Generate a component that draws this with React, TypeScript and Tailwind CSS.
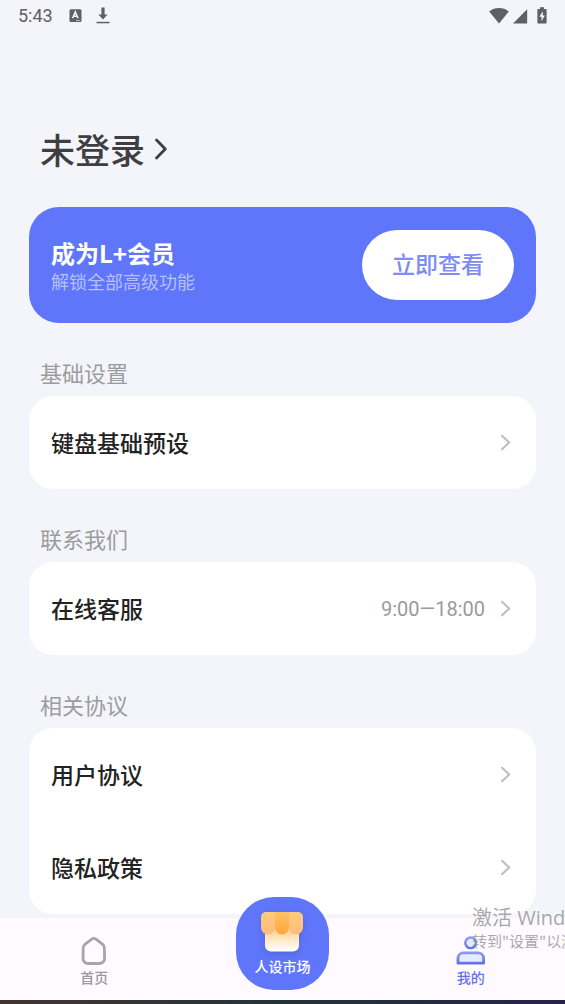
import { useState } from "react";
import type { ReactNode } from "react";

type Tab = "home" | "market" | "mine";

interface Row {
  label: string;
  note?: string;
}

interface Section {
  title: string;
  rows: Row[];
}

const sections: Section[] = [
  { title: "基础设置", rows: [{ label: "键盘基础预设" }] },
  { title: "联系我们", rows: [{ label: "在线客服", note: "9:00—18:00" }] },
  { title: "相关协议", rows: [{ label: "用户协议" }, { label: "隐私政策" }] },
];

function StatusBar() {
  return (
    <header className="flex h-8 items-center justify-between pr-[17px] pl-[18px] font-[Roboto,sans-serif] text-[#5f6063]">
      <div className="flex items-center">
        <span className="text-[18px] leading-8">5:43</span>
        <svg className="ml-4 h-[14px] w-[14px]" viewBox="0 0 14 14" fill="none">
          <rect x="0.500" y="0.200" width="12" height="12.800" rx="1.500" fill="currentColor" />
          <path d="M3.600 9.300 6.300 3 9 9.300M4.600 7.300H8" stroke="#f4f5fa" strokeWidth="1.600" />
          <path d="M7 11.500h4" stroke="#b9babd" strokeWidth="1" />
        </svg>
        <svg className="ml-3 h-[18px] w-[16px]" viewBox="0 0 16 18" fill="currentColor">
          <path d="M6.400.500h3.200v7h3L8 12.500 3.400 7.500h3z" />
          <path d="M1.500 14.800h13v1.500h-13z" />
        </svg>
      </div>
      <div className="flex items-center">
        <svg className="h-[18px] w-[20px]" viewBox="0 0 20 18" fill="currentColor">
          <path d="M10 16.600.200 4.600C2.900 2.100 6.300 1 10 1s7.100 1.100 9.800 3.600z" />
        </svg>
        <svg className="ml-1 h-[18px] w-[15px]" viewBox="0 0 15 18" fill="currentColor">
          <path d="M14.200 2.200v14.200H0z" />
        </svg>
        <svg className="ml-2 h-[18px] w-[12px]" viewBox="0 0 12 18">
          <path
            d="M4 .200h4v1.700h1.600c.6 0 1 .4 1 1v12.600c0 .6-.4 1-1 1H2.400c-.6 0-1-.4-1-1V2.900c0-.6.4-1 1-1H4z"
            fill="currentColor"
          />
          <path d="M6.800 4.200 3.400 9.800h2.100v4.400l3.300-5.700H6.800z" fill="#f4f5fa" />
        </svg>
      </div>
    </header>
  );
}

function Chevron() {
  return (
    <svg className="h-[18px] w-[12px]" viewBox="0 0 12 18" fill="none">
      <path
        d="M2 1.700 9.200 8.500 2 15.300"
        stroke="#bdbdbd"
        strokeWidth="2"
        strokeLinecap="round"
        strokeLinejoin="round"
      />
    </svg>
  );
}

function HomeIcon() {
  return (
    <svg className="h-[30px] w-[28px]" viewBox="0 0 28 30" fill="none">
      <path
        d="M11.700 3.200 5.200 8.100A5 5 0 0 0 3.200 12.100L3 22.400a5 5 0 0 0 5 5.100H19.600a5 5 0 0 0 5-5.100L24.400 12.100a5 5 0 0 0-2-4L15.900 3.200a3.500 3.500 0 0 0-4.200 0z"
        stroke="#a6a5a8"
        strokeWidth="2.800"
        strokeLinejoin="round"
      />
    </svg>
  );
}

function MineIcon() {
  return (
    <svg className="h-[30px] w-[30px]" viewBox="0 0 30 30" fill="none">
      <defs>
        <linearGradient id="mineStroke" x1="0" y1="0" x2="0" y2="1">
          <stop offset="0" stopColor="#8e98f2" />
          <stop offset="1" stopColor="#6571e6" />
        </linearGradient>
      </defs>
      <circle cx="14.600" cy="6.800" r="5.300" fill="#e3edff" stroke="url(#mineStroke)" strokeWidth="2.400" />
      <path
        d="M2 27.200v-4.900a5.500 5.500 0 0 1 5.500-5.500h14.600a5.500 5.500 0 0 1 5.500 5.500v4.900z"
        fill="#e3edff"
        stroke="url(#mineStroke)"
        strokeWidth="2.800"
        strokeLinejoin="round"
      />
    </svg>
  );
}

function MarketIcon() {
  return (
    <svg className="h-[42px] w-[44px] drop-shadow-md" viewBox="0 0 44 42" fill="none">
      <defs>
        <linearGradient id="shopBody" x1="0" y1="0" x2="0" y2="1">
          <stop offset="0" stopColor="#ffc670" />
          <stop offset="0.400" stopColor="#ffe0b0" />
          <stop offset="1" stopColor="#ffffff" />
        </linearGradient>
        <linearGradient id="shopSide" x1="0" y1="0" x2="0" y2="1">
          <stop offset="0" stopColor="#ffcb7c" />
          <stop offset="1" stopColor="#fdbb80" />
        </linearGradient>
        <linearGradient id="shopMid" x1="0" y1="0" x2="0" y2="1">
          <stop offset="0" stopColor="#ffc263" />
          <stop offset="1" stopColor="#ffa63c" />
        </linearGradient>
      </defs>
      <path d="M5 14h34v20.500a6 6 0 0 1-6 6H11a6 6 0 0 1-6-6z" fill="url(#shopBody)" />
      <path d="M6 1h9v15.500a7 7 0 0 1-14 0V6a5 5 0 0 1 5-5z" fill="url(#shopSide)" />
      <path d="M29 1h9a5 5 0 0 1 5 5v10.500a7 7 0 0 1-14 0z" fill="url(#shopSide)" />
      <path d="M15 1h14v15.500a7 7 0 0 1-14 0z" fill="url(#shopMid)" />
    </svg>
  );
}

function Card({ children }: { children: ReactNode }) {
  return <ul className="overflow-hidden rounded-[24px] bg-white">{children}</ul>;
}

export default function App() {
  const [tab, setTab] = useState<Tab>("mine");

  return (
    <div className="relative flex min-h-screen flex-col overflow-hidden bg-[#f4f5fa] font-['Noto_Sans_CJK_SC',sans-serif]">
      <StatusBar />

      <main className="flex-1 px-[29px] pb-1">
        <button type="button" className="mt-[92px] ml-[11px] flex items-center gap-2 text-[#3f3f42]">
          <span className="text-[35px] leading-[50px] font-medium">未登录</span>
          <svg className="h-[24px] w-[18px]" viewBox="0 0 18 24" fill="none">
            <path
              d="M3.500 3 12.300 12 3.500 21"
              stroke="currentColor"
              strokeWidth="2.800"
              strokeLinecap="round"
              strokeLinejoin="round"
            />
          </svg>
        </button>

        {/* 会员卡片 */}
        <section className="mt-[33px] flex h-[116px] items-center justify-between rounded-[30px] bg-[#5f76fa] px-[22px]">
          <div>
            <h2 className="text-[24px] leading-[32px] font-bold text-white">成为L+会员</h2>
            <p className="text-[18px] leading-6 text-[#b5c0fd]">解锁全部高级功能</p>
          </div>
          <button
            type="button"
            className="h-[70px] w-[152px] rounded-full bg-white pb-[3px] text-[23px] font-medium text-[#7d8cf0]"
          >
            立即查看
          </button>
        </section>

        {sections.map((section) => (
          <section key={section.title} className="pt-[34px]">
            <h3 className="mb-[9px] pl-[11px] text-[22px] leading-[30px] text-[#9c9ca0]">{section.title}</h3>
            <Card>
              {section.rows.map((row) => (
                <li key={row.label}>
                  <button type="button" className="flex h-[93px] w-full items-center pr-6 pl-[22px] text-left">
                    <span className="flex-1 text-[23px] font-medium text-[#222222]">{row.label}</span>
                    {row.note && (
                      <span className="mr-[15px] font-[Roboto,sans-serif] text-[20px] text-[#9a9a9a]">{row.note}</span>
                    )}
                    <Chevron />
                  </button>
                </li>
              ))}
            </Card>
          </section>
        ))}
      </main>

      {/* 底部导航 */}
      <nav className="grid h-[82px] grid-cols-3 justify-items-center bg-[#fefaff] text-[14px] leading-5 font-medium">
        <button
          type="button"
          onClick={() => setTab("home")}
          aria-current={tab === "home"}
          className="flex flex-col items-center gap-px pt-[18px] text-[#99989b]"
        >
          <HomeIcon />
          首页
        </button>
        <button
          type="button"
          onClick={() => setTab("market")}
          aria-current={tab === "market"}
          className="relative -mt-[21px] flex h-[93px] w-[93px] flex-col items-center gap-[3px] rounded-[38px] bg-[#5f76fa] pt-[14px] text-white"
        >
          <MarketIcon />
          人设市场
        </button>
        <button
          type="button"
          onClick={() => setTab("mine")}
          aria-current={tab === "mine"}
          className="flex flex-col items-center gap-px pt-[18px] text-[#6672e4]"
        >
          <MineIcon />
          我的
        </button>
      </nav>
      <div className="h-1 bg-linear-to-r from-[#43332f] via-[#1f3438] to-[#25224a]" />

      <div className="pointer-events-none absolute right-0 bottom-[53px] w-[93px] overflow-hidden whitespace-nowrap text-[#8c8c8c]/75">
        <p className="font-['Open_Sans','Noto_Sans_CJK_SC',sans-serif] text-[20px] leading-[26px]">激活 Windows</p>
        <p className="text-[15px] leading-5">转到"设置"以激活 Windows。</p>
      </div>
    </div>
  );
}
